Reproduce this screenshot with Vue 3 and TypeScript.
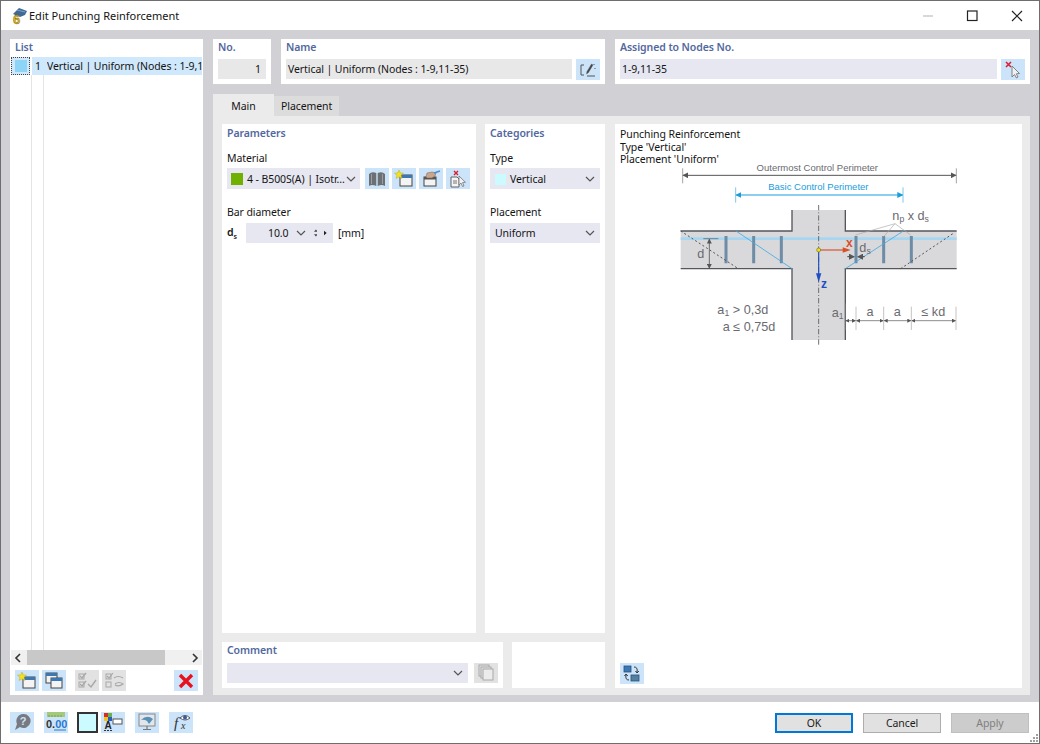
<script setup lang="ts">
const chevron = 'M1 1 L5 5 L9 1'

// dimension segments under the slab, in diagram units
const spans: [number, number][] = [
  [558, 586],
  [590, 669],
  [673, 752],
  [756, 886],
]
</script>

<template>
  <div class="window">
    <!-- Title bar -->
    <header class="titlebar">
      <svg class="app-icon" viewBox="0 0 20 20" width="20" height="20">
        <path d="M5 8 L11 2 L19 5 L17 9 L12 11 Z" fill="#3f6a96" />
        <path d="M9 4 L17 6" stroke="#7fa4c6" stroke-width="1" />
        <text x="8.5" y="18" class="app-icon__num">6</text>
      </svg>
      <span class="titlebar__text">Edit Punching Reinforcement</span>
      <div class="titlebar__controls">
        <svg viewBox="0 0 46 30" width="46" height="30"><path d="M22 15 H32" stroke="#c8c8c8" stroke-width="1.4" /></svg>
        <svg viewBox="0 0 46 30" width="46" height="30"><rect x="20.5" y="10" width="9.5" height="9.5" fill="none" stroke="#222" stroke-width="1.2" /></svg>
        <svg viewBox="0 0 46 30" width="46" height="30"><path d="M19 10 L29 20 M29 10 L19 20" stroke="#222" stroke-width="1.2" /></svg>
      </div>
    </header>

    <main class="body">
      <!-- List -->
      <aside class="card list">
        <div class="label list__label">List</div>
        <div class="list__tree">
          <div class="list__row">
            <span class="list__swatch"><i></i></span>
            <span class="list__num">1</span>
            <span class="list__text">Vertical | Uniform (Nodes : 1-9,1</span>
          </div>
          <i class="list__guide list__guide--a"></i>
          <i class="list__guide list__guide--b"></i>
        </div>
        <div class="scrollbar">
          <svg viewBox="0 0 8 10" width="8" height="10"><path d="M6 1 L2 5 L6 9" fill="none" stroke="#333" stroke-width="1.6" /></svg>
          <div class="scrollbar__track"><div class="scrollbar__thumb"></div></div>
          <svg viewBox="0 0 8 10" width="8" height="10"><path d="M2 1 L6 5 L2 9" fill="none" stroke="#333" stroke-width="1.6" /></svg>
        </div>
        <div class="list__tools">
          <button class="icon-btn">
            <svg viewBox="0 0 20 18" width="20" height="18">
              <rect x="6" y="5" width="12" height="11" fill="#f4f4f4" stroke="#444" />
              <rect x="6" y="5" width="12" height="3" fill="#3c78b4" />
              <path d="M5 0 L6.3 3 L9.5 3.2 L7 5.3 L8 8.5 L5 6.7 L2 8.5 L3 5.3 L.5 3.2 L3.7 3 Z" fill="#f4e21c" stroke="#b59f10" stroke-width=".4" />
            </svg>
          </button>
          <button class="icon-btn">
            <svg viewBox="0 0 20 18" width="20" height="18">
              <rect x="2" y="1" width="11" height="10" fill="#f4f4f4" stroke="#444" />
              <rect x="2" y="1" width="11" height="3" fill="#3c78b4" />
              <rect x="7" y="6" width="11" height="10" fill="#f4f4f4" stroke="#444" />
              <rect x="7" y="6" width="11" height="3" fill="#3c78b4" />
            </svg>
          </button>
          <button class="icon-btn icon-btn--off list__tools-gap">
            <svg viewBox="0 0 20 18" width="20" height="18" fill="none" stroke="#a8a8a8">
              <rect x="2" y="2" width="5" height="5" /><rect x="2" y="10" width="5" height="5" />
              <path d="M3 4 L5 6 L9 1 M3 12 L5 14 L9 9 M11 12 L14 15 L19 8" stroke-width="1.4" />
            </svg>
          </button>
          <button class="icon-btn icon-btn--off">
            <svg viewBox="0 0 20 18" width="20" height="18" fill="none" stroke="#a8a8a8">
              <rect x="2" y="2" width="5" height="5" /><rect x="2" y="10" width="5" height="5" />
              <path d="M3 4 L5 6 L9 1 M10 6 Q14 3 19 6 M11 12 Q15 9 19 12 Q15 15 11 13" stroke-width="1.2" />
            </svg>
          </button>
          <button class="icon-btn list__delete">
            <svg viewBox="0 0 16 16" width="16" height="16"><path d="M2 2 L14 14 M14 2 L2 14" stroke="#e8121e" stroke-width="3.4" /></svg>
          </button>
        </div>
      </aside>

      <div class="content">
        <!-- Head cards -->
        <div class="head">
          <section class="card head__no">
            <div class="label">No.</div>
            <div class="field field--grey field--right">1</div>
          </section>
          <section class="card head__name">
            <div class="label">Name</div>
            <div class="inline">
              <div class="field field--grey field--grow">Vertical | Uniform (Nodes : 1-9,11-35)</div>
              <button class="icon-btn">
                <svg viewBox="0 0 20 18" width="20" height="18" fill="none" stroke="#555">
                  <path d="M6 4 H3 V14 H6 M9 15 H17" stroke-width="1" />
                  <path d="M8.5 13 L9 10.5 L13.5 3 L15 4 L10.5 11.5 Z" fill="#444" stroke-width=".4" />
                  <path d="M16 3 V4 M17 7 V8" stroke-width="1" />
                </svg>
              </button>
            </div>
          </section>
          <section class="card head__nodes">
            <div class="label">Assigned to Nodes No.</div>
            <div class="inline">
              <div class="field field--grow">1-9,11-35</div>
              <button class="icon-btn">
                <svg viewBox="0 0 20 18" width="20" height="18">
                  <path d="M9 5 L9 16 L11.5 13.5 L13.5 17 L15 16 L13.3 12.8 L16.5 12.5 Z" fill="#eef2f5" stroke="#777" stroke-width=".9" />
                  <path d="M3 1 L8 6 M8 1 L3 6" stroke="#e01b2c" stroke-width="1.5" />
                </svg>
              </button>
            </div>
          </section>
        </div>

        <!-- Tabs -->
        <nav class="tabs">
          <div class="tab tab--active">Main</div>
          <div class="tab">Placement</div>
        </nav>

        <div class="panel">
          <div class="panel__left">
            <div class="panel__top">
              <section class="card params">
                <div class="label">Parameters</div>
                <div class="caption">Material</div>
                <div class="inline inline--material">
                  <div class="field select select--material">
                    <i class="swatch swatch--green"></i>
                    <span>4 - B500S(A) | Isotr...</span>
                    <svg class="chev" viewBox="0 0 10 6" width="10" height="6"><path :d="chevron" /></svg>
                  </div>
                  <button class="icon-btn">
                    <svg viewBox="0 0 20 18" width="20" height="18">
                      <path d="M2 4 Q5 1 9.3 3 V16 Q5 14 2 16 Z M10.7 3 Q15 1 18 4 V16 Q15 14 10.7 16 Z" fill="#6c6f74" />
                      <path d="M4.5 4 V14 M15.5 4 V14" stroke="#9a9da2" stroke-width="1" />
                    </svg>
                  </button>
                  <button class="icon-btn">
                    <svg viewBox="0 0 20 18" width="20" height="18">
                      <rect x="6" y="5" width="12" height="11" fill="#f4f4f4" stroke="#444" />
                      <rect x="6" y="5" width="12" height="3" fill="#3c78b4" />
                      <path d="M5 0 L6.3 3 L9.5 3.2 L7 5.3 L8 8.5 L5 6.7 L2 8.5 L3 5.3 L.5 3.2 L3.7 3 Z" fill="#f4e21c" stroke="#b59f10" stroke-width=".4" />
                    </svg>
                  </button>
                  <button class="icon-btn">
                    <svg viewBox="0 0 20 18" width="20" height="18">
                      <rect x="3" y="7" width="12" height="9" fill="#f4f4f4" stroke="#444" />
                      <rect x="3" y="7" width="12" height="2.5" fill="#555" />
                      <path d="M5 7 L6 3 L11 2 L15 3 L14 6 L11 8 L6 8 Z" fill="#c9a68c" stroke="#7a5f4c" stroke-width=".5" />
                      <path d="M13 3 L19 1" stroke="#4f8fd0" stroke-width="1.6" />
                    </svg>
                  </button>
                  <button class="icon-btn">
                    <svg viewBox="0 0 20 18" width="20" height="18">
                      <path d="M3 7 H9 L11 9 V17 H3 Z" fill="#f4f4f4" stroke="#555" stroke-width=".9" />
                      <path d="M5 11 H9 M5 13 H9" stroke="#555" stroke-width=".8" />
                      <path d="M11 6 L11 15 L13 13 L14.5 16.5 L16 16 L14.6 12.5 L17.5 12.3 Z" fill="#eef2f5" stroke="#777" stroke-width=".8" />
                      <path d="M6 1 L10 5 M10 1 L6 5" stroke="#e01b2c" stroke-width="1.4" />
                    </svg>
                  </button>
                </div>
                <div class="caption caption--bar">Bar diameter</div>
                <div class="bar-row">
                  <span class="bar-row__sym">d<sub>s</sub></span>
                  <div class="field spinner">
                    <span class="spinner__value">10.0</span>
                    <svg class="chev" viewBox="0 0 10 6" width="10" height="6"><path :d="chevron" /></svg>
                    <svg class="spinner__updown" viewBox="0 0 7 14" width="7" height="14"><path d="M3.5 0.5 L7 4.5 H0 Z M3.5 13.5 L7 9.5 H0 Z" fill="#444" /></svg>
                    <svg class="spinner__next" viewBox="0 0 5 8" width="5" height="8"><path d="M0 0 L5 4 L0 8 Z" fill="#222" /></svg>
                  </div>
                  <span class="bar-row__unit">[mm]</span>
                </div>
              </section>

              <section class="card cats">
                <div class="label">Categories</div>
                <div class="caption">Type</div>
                <div class="field select select--type">
                  <i class="swatch swatch--cyan"></i>
                  <span class="select__text">Vertical</span>
                  <svg class="chev" viewBox="0 0 10 6" width="10" height="6"><path :d="chevron" /></svg>
                </div>
                <div class="caption caption--bar">Placement</div>
                <div class="field select select--tall">
                  <span class="select__text">Uniform</span>
                  <svg class="chev" viewBox="0 0 10 6" width="10" height="6"><path :d="chevron" /></svg>
                </div>
              </section>
            </div>

            <div class="panel__bottom">
              <section class="card comment">
                <div class="label">Comment</div>
                <div class="inline">
                  <div class="field select field--grow select--comment">
                    <svg class="chev" viewBox="0 0 10 6" width="10" height="6"><path :d="chevron" /></svg>
                  </div>
                  <button class="icon-btn icon-btn--off">
                    <svg viewBox="0 0 20 18" width="20" height="18" fill="#e4e4e4" stroke="#a8a8a8">
                      <rect x="3" y="1" width="10" height="11" /><rect x="5" y="3" width="10" height="11" /><rect x="7" y="5" width="10" height="11" fill="#ececec" />
                    </svg>
                  </button>
                </div>
              </section>
              <section class="card blank"></section>
            </div>
          </div>

          <!-- Preview -->
          <section class="card preview">
            <div class="preview__text">
              Punching Reinforcement<br />
              Type 'Vertical'<br />
              Placement 'Uniform'
            </div>
            <svg class="diagram" viewBox="0 0 930 585" width="310" height="195">
              <defs>
                <marker id="arr-dark" markerWidth="6" markerHeight="6" refX="5" refY="3" orient="auto-start-reverse"><path d="M0 0 L6 3 L0 6 Z" fill="#555" /></marker>
                <marker id="arr-blue" markerWidth="6" markerHeight="6" refX="5" refY="3" orient="auto-start-reverse"><path d="M0 0 L6 3 L0 6 Z" fill="#1a9ddc" /></marker>
              </defs>
              <!-- slab and column -->
              <rect x="62" y="228" width="828" height="113" fill="#d9d9db" />
              <rect x="396" y="165" width="160" height="390" fill="#d9d9db" />
              <path d="M62 251 H890" stroke="#a6d6f2" stroke-width="8" />
              <path d="M62 228 H396 V165 M556 165 V228 H890 M62 341 H396 V555 M556 555 V341 H890" fill="none" stroke="#54565c" stroke-width="4" />
              <!-- bars -->
              <path d="M198 243 V325 M281 243 V325 M364 243 V325 M588 243 V325 M671 243 V325 M754 243 V325" stroke="#6f8ca6" stroke-width="9" />
              <path d="M228 228 L396 341 M556 341 L730 228" stroke="#45a9e2" stroke-width="2.5" />
              <path d="M62 228 L235 341 M722 341 L880 235" stroke="#555" stroke-width="3" stroke-dasharray="6 7" />
              <path d="M476 150 V575" stroke="#555" stroke-width="2.5" stroke-dasharray="16 6 3 6" />
              <!-- top dimensions -->
              <path d="M68 40 V85 M889 40 V85" stroke="#777" stroke-width="2" />
              <path d="M70 61 H887" stroke="#555" stroke-width="3" marker-start="url(#arr-dark)" marker-end="url(#arr-dark)" />
              <text x="472" y="47" class="dim dim--big">Outermost Control Perimeter</text>
              <path d="M227 97 V143 M729 97 V143" stroke="#45a9e2" stroke-width="2" />
              <path d="M229 120 H727" stroke="#1a9ddc" stroke-width="3" marker-start="url(#arr-blue)" marker-end="url(#arr-blue)" />
              <text x="475" y="106" class="dim dim--big dim--blue">Basic Control Perimeter</text>
              <!-- axes -->
              <path d="M476 285 H555" stroke="#d8502a" stroke-width="3.5" />
              <path d="M548 277 L572 285 L548 293 Z" fill="#d8502a" />
              <text x="558" y="277" class="axis axis--x">x</text>
              <path d="M476 285 V360" stroke="#1f4fc4" stroke-width="3.5" />
              <path d="M468 355 L476 382 L484 355 Z" fill="#1f4fc4" />
              <text x="483" y="399" class="axis axis--z">z</text>
              <circle cx="476" cy="285" r="6" fill="#f0e020" stroke="#7a7a10" stroke-width="2" />
              <!-- d dimension -->
              <path d="M130 251 H175" stroke="#555" stroke-width="2" />
              <path d="M148 253 V339" stroke="#555" stroke-width="2.5" marker-start="url(#arr-dark)" marker-end="url(#arr-dark)" />
              <text x="122" y="310" class="dim dim--lg">d</text>
              <!-- ds -->
              <path d="M562 305 H582" stroke="#444" stroke-width="3" marker-end="url(#arr-dark)" />
              <path d="M614 305 H594" stroke="#444" stroke-width="3" marker-end="url(#arr-dark)" />
              <text x="598" y="292" class="dim dim--lg dim--start">d<tspan class="dim--sub" dy="6">s</tspan></text>
              <path d="M586 240 L705 206 L671 245 M705 206 L752 240" fill="none" stroke="#aaa" stroke-width="2" />
              <text x="697" y="194" class="dim dim--lg dim--start">n<tspan class="dim--sub" dy="8">p</tspan><tspan dy="-8"> x d</tspan><tspan class="dim--sub" dy="6">s</tspan></text>
              <!-- formula -->
              <text x="172" y="478" class="dim dim--lg dim--start">a<tspan class="dim--sub" dy="6">1</tspan><tspan dy="-6"> &gt; 0,3d</tspan></text>
              <text x="188" y="527" class="dim dim--lg dim--start">a ≤ 0,75d</text>
              <!-- bottom dimensions -->
              <path d="M556 445 V525 M588 455 V525 M671 455 V525 M754 455 V525 M888 455 V525" stroke="#888" stroke-width="1.5" />
              <path
                v-for="[from, to] in spans"
                :key="from"
                :d="`M${from} 497 H${to}`"
                stroke="#555"
                stroke-width="2"
                marker-start="url(#arr-dark)"
                marker-end="url(#arr-dark)"
              />
              <text x="515" y="486" class="dim dim--lg dim--start">a<tspan class="dim--sub" dy="6">1</tspan></text>
              <text x="630" y="484" class="dim dim--lg">a</text>
              <text x="712" y="484" class="dim dim--lg">a</text>
              <text x="820" y="484" class="dim dim--lg">≤ kd</text>
            </svg>
            <button class="icon-btn preview__btn">
              <svg viewBox="0 0 20 18" width="20" height="18">
                <rect x="2" y="1" width="7" height="6" fill="#3c78b4" stroke="#26507a" stroke-width=".8" />
                <rect x="9" y="10" width="8" height="6" fill="#54809f" stroke="#26507a" stroke-width=".8" />
                <path d="M12 2 Q16 2 15 7 M13.5 6 L15 8 L16.8 6 M7 15 Q3 15 4 10 M2.5 11 L4 9 L5.8 11" fill="none" stroke="#333" stroke-width="1" />
              </svg>
            </button>
          </section>
        </div>
      </div>
    </main>

    <!-- Footer -->
    <footer class="footer">
      <button class="icon-btn">
        <svg viewBox="0 0 20 18" width="20" height="18">
          <path d="M11 1 A7 7 0 1 1 8 14 L3 17 L5 11 A7 7 0 0 1 11 1 Z" fill="#777a80" />
          <text x="11" y="12" class="help-mark">?</text>
        </svg>
      </button>
      <button class="icon-btn footer__num">
        <svg viewBox="0 0 22 20" width="22" height="20">
          <rect x="2" y="0" width="18" height="5" fill="#a4c97c" />
          <path d="M4 3 V5 M7 3 V5 M10 3 V5 M13 3 V5 M16 3 V5" stroke="#6e9a4a" stroke-width=".8" />
          <text x="1" y="16" class="num-mark">0.<tspan fill="#2a7ad0">00</tspan></text>
          <path d="M9 18 H21" stroke="#2a7ad0" />
        </svg>
      </button>
      <div class="footer__swatch"></div>
      <button class="icon-btn">
        <svg viewBox="0 0 20 18" width="20" height="18">
          <rect x="1" y="0" width="4" height="4" fill="#d92a2a" /><rect x="5" y="0" width="4" height="4" fill="#6db33f" />
          <rect x="1" y="4" width="4" height="4" fill="#e8c820" /><rect x="5" y="4" width="4" height="4" fill="#2a5ac8" />
          <rect x="10" y="6" width="9" height="5" fill="#fff" stroke="#555" />
          <text x="5" y="16" class="letter-mark">A</text>
          <path d="M1 17.5 H9" stroke="#333" stroke-dasharray="2 1" />
        </svg>
      </button>
      <button class="icon-btn footer__view">
        <svg viewBox="0 0 20 18" width="20" height="18">
          <rect x="2" y="1" width="16" height="12" fill="#dfe6ec" stroke="#888" />
          <path d="M4 7 Q10 1 16 6 L12 11 L10 8 Q7 6 4 7 Z" fill="#5a8fb6" />
          <path d="M10 13 V16 M6 16.5 H14" stroke="#777" stroke-width="1.2" />
        </svg>
      </button>
      <button class="icon-btn">
        <svg viewBox="0 0 20 18" width="20" height="18">
          <text x="3" y="15" class="fx-mark">f</text>
          <text x="10" y="16" class="fx-mark fx-mark--small">x</text>
          <path d="M9 5 Q14 0 19 5 Q14 9 9 5 Z" fill="#fff" stroke="#333" stroke-width=".8" />
          <circle cx="14" cy="4.5" r="2" fill="#3c5a9c" />
        </svg>
      </button>
      <div class="footer__actions">
        <button class="btn btn--default">OK</button>
        <button class="btn">Cancel</button>
        <button class="btn btn--disabled">Apply</button>
      </div>
      <svg class="grip" viewBox="0 0 9 9" width="9" height="9" fill="#a0a0a0">
        <rect x="6" y="0" width="2" height="2" /><rect x="3" y="3" width="2" height="2" /><rect x="6" y="3" width="2" height="2" />
        <rect x="0" y="6" width="2" height="2" /><rect x="3" y="6" width="2" height="2" /><rect x="6" y="6" width="2" height="2" />
      </svg>
    </footer>
  </div>
</template>

<style>
html,
body {
  margin: 0;
  background: #fff;
}
</style>

<style scoped>
.window {
  width: 1040px;
  height: 744px;
  box-sizing: border-box;
  border: 1px solid #6e6e6e;
  display: flex;
  flex-direction: column;
  font-family: "Noto Sans", "Open Sans", sans-serif;
  font-size: 10.5px;
  letter-spacing: -0.08px;
  color: #141414;
  background: #fff;
  overflow: hidden;
}

/* title bar */
.titlebar {
  height: 29px;
  flex: none;
  display: flex;
  align-items: center;
  padding-left: 7px;
}

.app-icon {
  flex: none;
  margin-right: 1px;
}

.app-icon__num {
  font-family: "Liberation Sans", sans-serif;
  font-size: 13px;
  font-weight: 700;
  text-anchor: middle;
  fill: #e3b81a;
  stroke: #6e5a10;
  stroke-width: 0.4;
}

.titlebar__text {
  font-size: 11px;
  letter-spacing: 0;
}

.titlebar__controls {
  margin-left: auto;
  display: flex;
}

.body {
  flex: 1;
  min-height: 0;
  background: #d1d1d5;
  padding: 9px 9px 7px 9px;
  display: flex;
  gap: 10px;
}

.card {
  background: #fff;
  box-sizing: border-box;
}

.label {
  color: #5368a0;
  font-weight: 600;
  line-height: 15px;
}

/* list */
.list {
  width: 193px;
  flex: none;
  display: flex;
  flex-direction: column;
  padding: 1px 1px 4px 1px;
}

.list__label {
  padding-left: 4px;
}

.list__tree {
  flex: 1;
  position: relative;
  margin-top: 2px;
  overflow: hidden;
}

.list__row {
  height: 18px;
  line-height: 19px;
  display: flex;
  align-items: center;
  background: #cfe8fb;
  margin-left: 21px;
  padding-top: 1px;
  box-sizing: border-box;
}

.list__swatch {
  position: absolute;
  left: 0;
  top: 0;
  width: 19px;
  height: 18px;
  box-sizing: border-box;
  border: 1px dotted #444;
  display: flex;
  align-items: center;
  justify-content: center;
  background: #cfe8fb;
}

.list__swatch i {
  width: 12px;
  height: 12px;
  background: #8cd5f6;
}

.list__num {
  width: 12px;
  margin-left: 3px;
}

.list__text {
  white-space: nowrap;
  overflow: hidden;
  flex: 1;
}

.list__guide {
  position: absolute;
  top: 18px;
  bottom: 0;
  width: 1px;
  background: #e4e4e4;
}

.list__guide--a {
  left: 20px;
}

.list__guide--b {
  left: 32px;
}

.scrollbar {
  height: 15px;
  background: #f0f0f0;
  display: flex;
  align-items: center;
  justify-content: space-between;
  padding: 0 3px;
  gap: 3px;
}

.scrollbar__track {
  flex: 1;
  height: 15px;
}

.scrollbar__thumb {
  width: 138px;
  margin-left: 2px;
  height: 15px;
  background: #c8c8c8;
}

.list__tools {
  display: flex;
  gap: 3px;
  padding: 5px 4px 0;
}

.list__tools-gap {
  margin-left: 6px;
}

.list__delete {
  margin-left: auto;
}

.icon-btn {
  width: 24px;
  height: 21px;
  flex: none;
  border: 0;
  padding: 0;
  background: #cbe4f9;
  display: flex;
  align-items: center;
  justify-content: center;
}

.icon-btn--off {
  background: #e2e2e2;
}

/* main column */
.content {
  flex: 1;
  min-width: 0;
  display: flex;
  flex-direction: column;
}

.head {
  display: flex;
  height: 45px;
  gap: 10px;
  flex: none;
}

.head .card {
  padding: 1px 5px 0;
}

.head__no {
  width: 58px;
}

.head__name {
  width: 324px;
}

.head__nodes {
  flex: 1;
}

.inline {
  display: flex;
  gap: 4px;
  margin-top: 4px;
}

.field {
  height: 20px;
  line-height: 21px;
  background: #e6e7f1;
  padding: 0 2px;
  box-sizing: border-box;
}

.field--grey {
  background: #e8e8e8;
}

.head__no .field {
  margin-top: 4px;
}

.field--right {
  text-align: right;
  padding-right: 5px;
}

.field--grow {
  flex: 1;
  min-width: 0;
  padding: 0 2px;
}

/* tabs */
.tabs {
  display: flex;
  align-items: flex-end;
  margin-top: 10px;
  height: 22px;
  flex: none;
}

.tab {
  height: 20px;
  line-height: 21px;
  padding: 0 7px;
  background: #dcdcdc;
}

.tab--active {
  height: 22px;
  line-height: 24px;
  width: 61px;
  box-sizing: border-box;
  text-align: center;
  background: #ebebeb;
}

.panel {
  flex: 1;
  min-height: 0;
  background: #ebebeb;
  padding: 8px 8px 7px 9px;
  display: flex;
  gap: 10px;
}

.panel__left {
  width: 383px;
  flex: none;
  display: flex;
  flex-direction: column;
  gap: 9px;
}

.panel__top {
  flex: 1;
  min-height: 0;
  display: flex;
  gap: 9px;
}

.params {
  width: 254px;
  flex: none;
  padding: 2px 5px;
}

.cats {
  flex: 1;
  padding: 2px 5px;
}

.caption {
  margin-top: 10px;
  line-height: 15px;
}

.caption--bar {
  margin-top: 16px;
}

.cats .caption,
.params .caption {
  margin-bottom: 2px;
}

.caption--bar + .bar-row,
.caption--bar + .select {
  margin-top: 3px;
}

.inline--material {
  margin-top: 0;
  gap: 3px;
}

.inline--material .select {
  margin-right: 2px;
}

.select {
  display: flex;
  align-items: center;
  height: 21px;
  padding: 0 5px;
}

.select--tall {
  height: 20px;
}

.select--material {
  width: 133px;
  flex: none;
  padding: 1px 4px 0;
  white-space: nowrap;
}

.select--type {
  padding-top: 1px;
}

.select__text {
  flex: 1;
}

.select--comment {
  height: 20px;
}

.swatch {
  width: 12px;
  height: 12px;
  flex: none;
  margin-right: 4px;
}

.swatch--green {
  background: #6fb000;
}

.swatch--cyan {
  width: 11px;
  height: 11px;
  margin: 0 4px 0 0;
  background: #ccfbff;
}

.chev {
  margin-left: auto;
  flex: none;
  fill: none;
  stroke: #555;
  stroke-width: 1.2;
}

.bar-row {
  display: flex;
  align-items: center;
}

.bar-row__sym {
  width: 19px;
  font-weight: 600;
}

.bar-row__sym sub {
  font-size: 7px;
}

.spinner {
  width: 87px;
  display: flex;
  align-items: center;
  height: 20px;
  padding: 0 6px 0 22px;
}

.spinner__value {
  margin-right: 7px;
}

.spinner .chev {
  margin-left: 0;
}

.spinner__updown {
  margin-left: 8px;
}

.spinner__next {
  margin-left: 7px;
}

.bar-row__unit {
  margin-left: 5px;
}

.panel__bottom {
  height: 46px;
  flex: none;
  display: flex;
  gap: 9px;
}

.comment {
  width: 281px;
  flex: none;
  padding: 1px 5px;
}

.comment .inline {
  margin-top: 5px;
  gap: 6px;
}

.comment .select {
  height: 20px;
}

.comment .icon-btn {
  height: 20px;
}

.blank {
  flex: 1;
}

/* preview */
.preview {
  flex: 1;
  min-width: 0;
  display: flex;
  flex-direction: column;
  padding: 4px 5px;
  position: relative;
}

.preview__text {
  line-height: 12.5px;
  height: 39px;
}

.diagram {
  margin: -12px 0 0 40px;
  display: block;
}

.preview__btn {
  position: absolute;
  left: 5px;
  bottom: 4px;
}

.dim {
  font-family: "Liberation Sans", sans-serif;
  fill: #6a6a70;
  text-anchor: middle;
  letter-spacing: 0;
}

.dim--big {
  font-size: 28.5px;
}

.dim--lg {
  font-size: 38px;
}

.dim--start {
  text-anchor: start;
}

.dim--blue {
  fill: #1a9ddc;
}

.dim--sub {
  font-size: 26px;
}

.axis {
  font-family: "Liberation Sans", sans-serif;
  font-size: 36px;
  font-weight: 700;
}

.axis--x {
  fill: #d8502a;
}

.axis--z {
  fill: #1f4fc4;
}

/* footer */
.footer {
  height: 41px;
  flex: none;
  display: flex;
  align-items: center;
  padding: 0 10px 0 9px;
  position: relative;
}

.footer > .icon-btn,
.footer__swatch {
  margin-top: -1px;
}

.footer__num {
  margin-left: 10px;
}

.footer__swatch {
  width: 21px;
  height: 21px;
  box-sizing: border-box;
  margin-left: 9px;
  margin-right: 3px;
  border: 2px solid #333;
  background: #ccfbff;
}

.footer__view {
  margin: 0 10px;
}

.help-mark {
  font-size: 11px;
  font-weight: 700;
  fill: #cbe4f9;
  text-anchor: middle;
  font-family: "Liberation Sans", sans-serif;
}

.num-mark {
  font-size: 11px;
  font-weight: 700;
  fill: #333;
  font-family: "Liberation Sans", sans-serif;
  letter-spacing: 0;
}

.letter-mark {
  font-size: 10px;
  font-weight: 700;
  text-anchor: middle;
  fill: #222;
  font-family: "Liberation Sans", sans-serif;
}

.fx-mark {
  font-family: "Liberation Serif", serif;
  font-style: italic;
  font-size: 15px;
  fill: #333;
}

.fx-mark--small {
  font-size: 10px;
}

.footer__actions {
  margin-left: auto;
  display: flex;
  gap: 10px;
}

.btn {
  width: 78px;
  height: 20px;
  box-sizing: border-box;
  border: 1px solid #adadad;
  background: #e1e1e1;
  font: inherit;
  letter-spacing: inherit;
  color: #1c1c1c;
  padding: 0;
}

.btn--default {
  border: 2px solid #0078d7;
}

.btn--disabled {
  background: #cccccc;
  border-color: #bfbfbf;
  color: #808080;
}

.grip {
  position: absolute;
  right: 0;
  bottom: 0;
}
</style>
